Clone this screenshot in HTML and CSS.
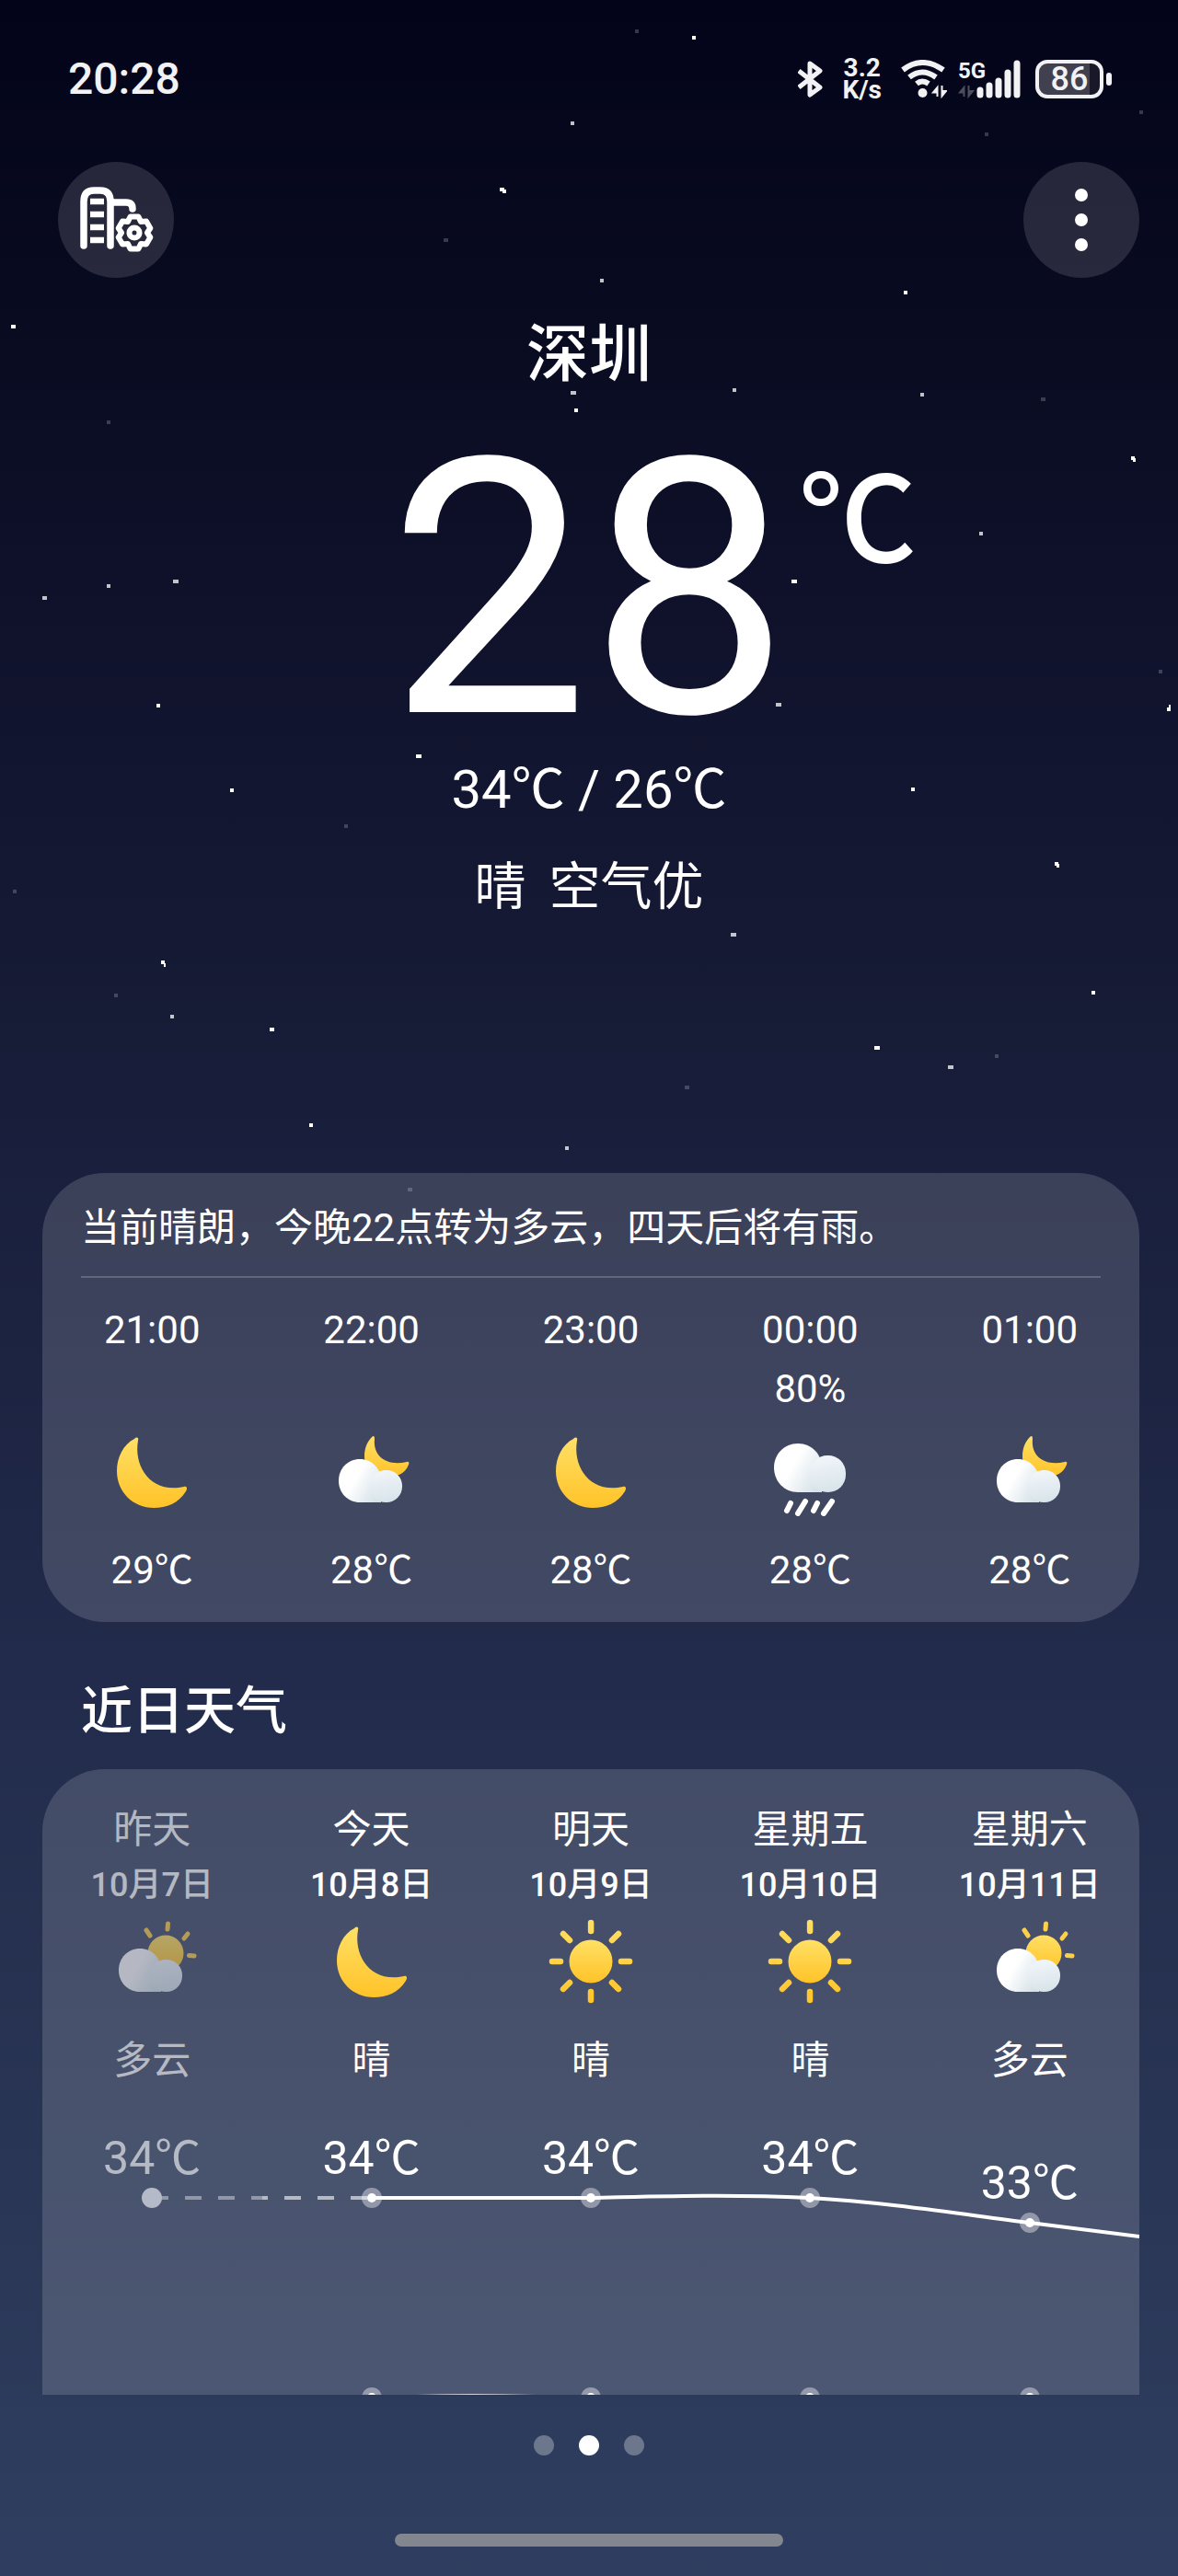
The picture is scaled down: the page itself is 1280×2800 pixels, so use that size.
FILE: index.html
```html
<!DOCTYPE html>
<html lang="zh-CN">
<head>
    <meta charset="UTF-8">
    <meta name="viewport" content="width=device-width, initial-scale=1.0">
    <title>深圳天气</title>
    <link rel="stylesheet" href="styles.css">
</head>
<body>
    <!-- Shared weather icons -->
    <svg class="icon-defs" width="0" height="0" aria-hidden="true">
        <defs>
            <linearGradient id="gold" x1="0" y1="0" x2="0" y2="1">
                <stop offset="0" stop-color="#ffe066"/>
                <stop offset="1" stop-color="#ffc328"/>
            </linearGradient>
            <linearGradient id="goldRays" gradientUnits="userSpaceOnUse" x1="0" y1="0" x2="0" y2="96">
                <stop offset="0" stop-color="#ffe066"/>
                <stop offset="1" stop-color="#ffc328"/>
            </linearGradient>
            <linearGradient id="cloudBig" x1="0" y1="0.2" x2="1" y2="0.8">
                <stop offset="0.4" stop-color="#ffffff"/>
                <stop offset="1" stop-color="#d5e1e8"/>
            </linearGradient>
            <linearGradient id="cloudSmall" x1="0.3" y1="0" x2="0.5" y2="1">
                <stop offset="0" stop-color="#f2f6fa"/>
                <stop offset="1" stop-color="#d8e4ea"/>
            </linearGradient>
        </defs>
        <symbol id="moon" viewBox="0 0 96 96">
            <path fill="url(#gold)" d="M29 12C32 9 34 11 33 14C28 42 47 72 83 64C86 63 87 66 85 69C77 82 64 87 50 87C28 87 10 70 10 47C10 32 17 18 29 12Z"/>
        </symbol>
        <symbol id="cloud" viewBox="0 0 96 96">
            <path fill="url(#cloudBig)" d="M35 34C48 34 58 44 58 57V81H35C22 81 12 71 12 57.500C12 44 22 34 35 34Z"/>
            <rect x="46" y="46" width="35" height="35" rx="17" fill="url(#cloudSmall)"/>
        </symbol>
        <symbol id="cloud-moon" viewBox="0 0 96 96">
            <path fill="url(#gold)" d="M48 10C50 8 51 9 51 12C49 31 64 42 86 37C88 36 89 38 88 40C84 50 76 53 66 53C50 53 40 44 40 31C40 22 43 15 48 10Z"/>
            <use href="#cloud"/>
        </symbol>
        <symbol id="rain" viewBox="0 0 96 96">
            <path fill="url(#cloudBig)" d="M35 17C50 17 61 29 61 43V70H35C20 70 9 58 9 43C9 29 20 17 35 17Z"/>
            <rect x="48" y="30" width="39" height="40" rx="19" fill="url(#cloudSmall)"/>
            <path fill="none" stroke="#fff" stroke-width="6" stroke-linecap="round" d="M27 82L23 90M43 80L35 93M56 82L52 90M72 80L63 93"/>
        </symbol>
        <symbol id="sun" viewBox="0 0 96 96">
            <circle cx="48" cy="48" r="23.500" fill="url(#gold)"/>
            <path fill="none" stroke="url(#goldRays)" stroke-width="6.500" stroke-linecap="round" d="M48.100 6V15M48 81V90M6 48H15M81 48H90M18 18L25 25M78 18L71 25M18 78L25 71M78 78L71 71"/>
        </symbol>
        <symbol id="cloud-sun" viewBox="0 0 96 96" overflow="visible">
            <circle cx="63" cy="39" r="19.500" fill="url(#gold)"/>
            <path fill="none" stroke="#fbcf4a" stroke-width="5" stroke-linecap="round" d="M65.500 7L65 13M42 14L46 20M87 18L83 23M88.500 41.500L94 42"/>
            <use href="#cloud"/>
        </symbol>
    </svg>

    <div class="app">
        <!-- Night sky -->
        <svg class="stars" viewBox="0 0 1280 2800" preserveAspectRatio="xMidYMin slice" aria-hidden="true">
            <path d="M752 41h4M543 206h5M546 208h4M982 318h4M12 355h5M1229 498h4M1231 500h3M624 446h4M860 632h6M1268 771h4M1270 768h2M452 822h6M990 858h4M1146 939h4M1148 941h3M950 1139h6M175 1046h4M178 1049h2M293 1119h5M250 859h4M170 767h4M1186 1079h4M336 1223h4"/>
            <path opacity="0.750" d="M620 134h4M796 424h4M1000 429h4M620 427h6M1064 580h4M188 632h6M116 637h4M46 650h5M843 766h6M794 1016h6M185 1105h4M1030 1160h6M614 1248h4M652 305h4"/>
            <path opacity="0.200" d="M1238 122h4M482 261h5M1131 434h5M116 459h4M374 898h4M14 969h4M124 1082h4M1081 1148h4M744 1182h5M443 1293h5M1259 730h4M690 34h4M1070 146h4"/>
        </svg>

        <header class="status-bar">
            <time class="clock">20:28</time>
            <div class="status-icons">
                <svg class="bluetooth" viewBox="0 0 28 42" width="28" height="42" role="img" aria-label="蓝牙">
                    <path d="M1 12L24 30L13 38V4L24 12L1 30"/>
                </svg>
                <div class="speed"><span>3.2</span><span>K/s</span></div>
                <svg class="wifi" viewBox="0 0 51 42" width="51" height="42" role="img" aria-label="WLAN">
                    <path d="M3 11Q24 -5 47 11M10 19Q24 8 39 19M18 26Q24 21 31 26"/>
                    <circle cx="24.500" cy="36" r="5"/>
                    <path class="arrows" d="M40.500 40V30L36 35.500H40.500M45.500 28V39.500L50 34H45.500"/>
                </svg>
                <svg class="signal" viewBox="0 0 68 42" width="68" height="42" role="img" aria-label="5G 信号">
                    <text x="0" y="20">5G</text>
                    <path class="bars" d="M24 33V38M34 28V38M44 23V38M54 14V38M64 4V38"/>
                    <path class="arrows" d="M6.500 40V30L2 35.500H6.500M11.500 28V39.500L16 34H11.500"/>
                </svg>
                <div class="battery"><span>86</span></div>
            </div>
        </header>

        <div class="toolbar">
            <button type="button" class="round-button" aria-label="城市管理">
                <svg viewBox="0 0 126 126" width="126" height="126">
                    <g transform="translate(-63 -176)">
                        <path stroke-width="7.500" stroke-linecap="round" d="M91 267V219Q91 207 102 207H109Q120 207 120 219V267M124 220H137Q144 220 144 227"/>
                        <path stroke-width="6.500" d="M98 219H113M98 233H113M98 247H113M98 261H113"/>
                        <path transform="translate(146 253)" stroke-width="6" d="M-4.400 -17.500L4.400 -17.500L7 -12.100L12.900 -12.500L17.300 -5L14 0L17.300 5L12.900 12.500L7 12.100L4.400 17.500L-4.400 17.500L-7 12.100L-12.900 12.500L-17.300 5L-14 0L-17.300 -5L-12.900 -12.500L-7 -12.100Z"/>
                        <circle cx="146" cy="253" r="5.500" stroke-width="6"/>
                    </g>
                </svg>
            </button>
            <button type="button" class="round-button" aria-label="更多">
                <svg viewBox="0 0 126 126" width="126" height="126">
                    <path stroke-width="14" stroke-linecap="round" d="M63 36V36.100M63 63V63.100M63 90V90.100"/>
                </svg>
            </button>
        </div>

        <section class="current">
            <h1 class="city">深圳</h1>
            <div class="temperature">
                <span class="degrees">28</span>
                <span class="unit">℃</span>
            </div>
            <p class="range">34℃ / 26℃</p>
            <p class="condition">晴&nbsp; 空气优</p>
        </section>

        <section class="card hourly">
            <p class="hourly-text">当前晴朗，今晚22点转为多云，四天后将有雨。</p>
            <ul class="columns">
                <li>
                    <time>21:00</time><span class="rain-chance"></span>
                    <svg class="weather-icon"><use href="#moon"/></svg>
                    <span class="hour-temp">29℃</span>
                </li>
                <li>
                    <time>22:00</time><span class="rain-chance"></span>
                    <svg class="weather-icon"><use href="#cloud-moon"/></svg>
                    <span class="hour-temp">28℃</span>
                </li>
                <li>
                    <time>23:00</time><span class="rain-chance"></span>
                    <svg class="weather-icon"><use href="#moon"/></svg>
                    <span class="hour-temp">28℃</span>
                </li>
                <li>
                    <time>00:00</time><span class="rain-chance">80%</span>
                    <svg class="weather-icon"><use href="#rain"/></svg>
                    <span class="hour-temp">28℃</span>
                </li>
                <li>
                    <time>01:00</time><span class="rain-chance"></span>
                    <svg class="weather-icon"><use href="#cloud-moon"/></svg>
                    <span class="hour-temp">28℃</span>
                </li>
            </ul>
        </section>

        <h2 class="section-title">近日天气</h2>

        <section class="card daily">
            <ul class="columns">
                <li class="past">
                    <span>昨天</span><time class="date">10月7日</time>
                    <svg class="weather-icon"><use href="#cloud-sun"/></svg>
                    <span class="day-condition">多云</span>
                    <span class="day-temp">34℃</span>
                </li>
                <li>
                    <span>今天</span><time class="date">10月8日</time>
                    <svg class="weather-icon"><use href="#moon"/></svg>
                    <span class="day-condition">晴</span>
                    <span class="day-temp">34℃</span>
                </li>
                <li>
                    <span>明天</span><time class="date">10月9日</time>
                    <svg class="weather-icon"><use href="#sun"/></svg>
                    <span class="day-condition">晴</span>
                    <span class="day-temp">34℃</span>
                </li>
                <li>
                    <span>星期五</span><time class="date">10月10日</time>
                    <svg class="weather-icon"><use href="#sun"/></svg>
                    <span class="day-condition">晴</span>
                    <span class="day-temp">34℃</span>
                </li>
                <li>
                    <span>星期六</span><time class="date">10月11日</time>
                    <svg class="weather-icon"><use href="#cloud-sun"/></svg>
                    <span class="day-condition">多云</span>
                    <span class="day-temp cooler">33℃</span>
                </li>
            </ul>
            <!-- Highs, with the top of the lows curve below -->
            <svg class="chart" viewBox="0 3 1192 225" aria-hidden="true">
                <g class="chart-line">
                    <path stroke-dasharray="18 18" opacity="0.400" d="M119 14H239"/>
                    <path stroke-dasharray="18 18" stroke-dashoffset="12" opacity="0.600" d="M239 14H358"/>
                    <path d="M358 14H596C680 12 750 10 834 14C920 19 1000 32 1073 41L1192 56"/>
                    <path d="M358 232C430 228 500 228 596 232L834 236L1192 240"/>
                </g>
                <circle class="halo-past" cx="119" cy="14" r="11"/>
                <g class="halo">
                    <circle cx="358" cy="14" r="11"/>
                    <circle cx="596" cy="14" r="11"/>
                    <circle cx="834" cy="14" r="11"/>
                    <circle cx="1073" cy="41" r="11"/>
                    <circle cx="358" cy="231" r="11"/>
                    <circle cx="596" cy="231" r="11"/>
                    <circle cx="834" cy="231" r="11"/>
                    <circle cx="1073" cy="231" r="11"/>
                </g>
                <g fill="#fff">
                    <circle cx="358" cy="14" r="5"/>
                    <circle cx="596" cy="14" r="5"/>
                    <circle cx="834" cy="14" r="5"/>
                    <circle cx="1073" cy="41" r="5"/>
                    <circle cx="358" cy="231" r="5"/>
                    <circle cx="596" cy="231" r="5"/>
                    <circle cx="834" cy="231" r="5"/>
                    <circle cx="1073" cy="231" r="5"/>
                </g>
            </svg>
        </section>

        <nav class="pager" aria-label="城市">
            <button type="button" aria-label="第一个城市"></button>
            <button type="button" class="active" aria-label="深圳"></button>
            <button type="button" aria-label="第三个城市"></button>
        </nav>
        <div class="home-bar"></div>
    </div>
</body>
</html>
```

FILE: styles.css
```css
* {
    box-sizing: border-box;
}
body {
    margin: 0;
    font-family: Roboto, "Noto Sans CJK SC", sans-serif;
    font-size: 42px;
    color: #fff;
    background-color: #2f3e60;
}
h1, h2, p, ul {
    margin: 0;
    padding: 0;
}
h1, h2 {
    font-weight: 500;
}
button {
    border: none;
    padding: 0;
    cursor: pointer;
}
svg {
    display: block;
}
.icon-defs {
    position: absolute;
}
.app {
    position: relative;
    min-height: 100vh;
    overflow: hidden;
    background: linear-gradient(#03041a 0%, #080a1f 11%, #10122c 24%, #151933 36%, #191f3c 45%, #222b4b 65%, #293554 83%, #2f3e60 100%);
}
.stars {
    position: absolute;
    top: 0;
    left: 0;
    width: 100%;
    height: 100%;
    stroke: #fff;
    stroke-width: 4;
}

/* Status bar */
.status-bar {
    display: flex;
    justify-content: space-between;
    align-items: center;
    height: 172px;
    padding: 0 72px 0 74px;
    color: #f2f2f4;
}
.clock {
    font-size: 48px;
    font-weight: 500;
    line-height: 56px;
}
.status-icons {
    display: flex;
    align-items: center;
    fill: #f2f2f4;
}
.bluetooth {
    fill: none;
    stroke: #f2f2f4;
    stroke-width: 5;
    stroke-linejoin: round;
}
.speed {
    display: flex;
    flex-direction: column;
    align-items: center;
    margin: 0 20px;
    font-size: 28px;
    font-weight: 700;
    line-height: 24px;
}
.wifi {
    margin-right: 12px;
    stroke: #f2f2f4;
}
.wifi > path:first-child {
    fill: none;
    stroke-width: 6;
}
.wifi circle {
    stroke: none;
}
.status-icons .arrows {
    stroke-width: 2;
    stroke: #f2f2f4;
}
.signal {
    margin-right: 16px;
    overflow: visible;
}
.signal text {
    font-size: 24px;
    font-weight: 700;
}
.signal .bars {
    stroke: #f2f2f4;
    stroke-width: 7;
    stroke-linecap: round;
}
.signal .arrows {
    opacity: 0.3;
}
.battery {
    position: relative;
    width: 74px;
    height: 42px;
    margin-right: 9px;
    border: 4px solid #f2f2f4;
    border-radius: 13px;
    background: linear-gradient(90deg, #40404f 84%, #181828 84%);
    font-size: 36px;
    font-weight: 500;
    line-height: 34px;
    text-align: center;
}
.battery::after {
    content: "";
    position: absolute;
    top: 10px;
    right: -13px;
    width: 6px;
    height: 14px;
    border-radius: 3px;
    background-color: #f2f2f4;
}

/* Toolbar */
.toolbar {
    display: flex;
    justify-content: space-between;
    margin-top: 4px;
    padding: 0 42px 0 63px;
}
.round-button {
    width: 126px;
    height: 126px;
    border-radius: 50%;
    background-color: rgba(255, 255, 255, 0.13);
    fill: none;
    stroke: #fff;
    stroke-linejoin: round;
}

/* Current weather */
.current {
    position: relative;
    padding-top: 36px;
    text-align: center;
}
.city, .unit, .condition, .section-title {
    font-family: "Noto Sans CJK SC", sans-serif;
}
.city {
    font-size: 68px;
    line-height: 84px;
}
.temperature {
    display: grid;
    grid-template-columns: 1fr auto 1fr;
    margin-top: 60px;
}
.degrees {
    grid-column: 2;
    font-size: 388px;
    line-height: 320px;
}
.unit {
    padding: 8px 0 0 10px;
    font-size: 128px;
    font-weight: 500;
    line-height: 132px;
    text-align: left;
}
.range {
    margin-top: 20px;
    font-size: 58px;
    line-height: 72px;
}
.condition {
    margin-top: 29px;
    font-size: 56px;
    line-height: 72px;
}

/* Cards */
.card {
    position: relative;
    margin: 0 42px 0 46px;
    border-radius: 68px;
    background-color: rgba(255, 255, 255, 0.15);
}
.columns {
    display: grid;
    grid-template-columns: repeat(5, 1fr);
    list-style: none;
}
.columns li {
    display: flex;
    flex-direction: column;
    align-items: center;
}
.weather-icon {
    width: 96px;
    height: 96px;
    overflow: visible;
}
.hourly {
    margin-top: 280px;
    padding-bottom: 24px;
}
.hourly-text {
    margin: 0 42px;
    padding: 30px 0 22px;
    border-bottom: 2px solid rgba(255, 255, 255, 0.2);
    line-height: 60px;
}
.hourly .columns {
    padding-top: 25px;
    line-height: 64px;
}
.rain-chance {
    height: 64px;
    margin-bottom: 10px;
}
.hour-temp {
    margin-top: 27px;
}

.section-title {
    margin: 52px 88px 28px;
    font-size: 56px;
    line-height: 80px;
}
.daily {
    padding-top: 36px;
    border-radius: 68px 68px 0 0;
    line-height: 60px;
}
.past {
    opacity: 0.6;
}
.date {
    margin-bottom: 5px;
    font-size: 36px;
    font-weight: 500;
}
.day-condition {
    margin-top: 30px;
}
.day-temp {
    margin-top: 44px;
    font-size: 50px;
    line-height: 64px;
}
.cooler {
    margin-top: 71px;
    margin-bottom: -27px;
}
.chart {
    width: 100%;
    overflow: hidden;
}
.chart-line {
    fill: none;
    stroke: #fff;
    stroke-width: 4;
}
.halo {
    fill: #fff;
    opacity: 0.4;
}
.halo-past {
    fill: #b5bac9;
}

/* Bottom */
.pager {
    display: flex;
    justify-content: center;
    gap: 27px;
    margin-top: 44px;
}
.pager button {
    width: 22px;
    height: 22px;
    border-radius: 50%;
    background-color: rgba(255, 255, 255, 0.3);
}
.pager .active {
    background-color: #fff;
}
.home-bar {
    width: 33%;
    height: 14px;
    margin: 85px auto 32px;
    border-radius: 7px;
    background-color: #82868e;
}
```
